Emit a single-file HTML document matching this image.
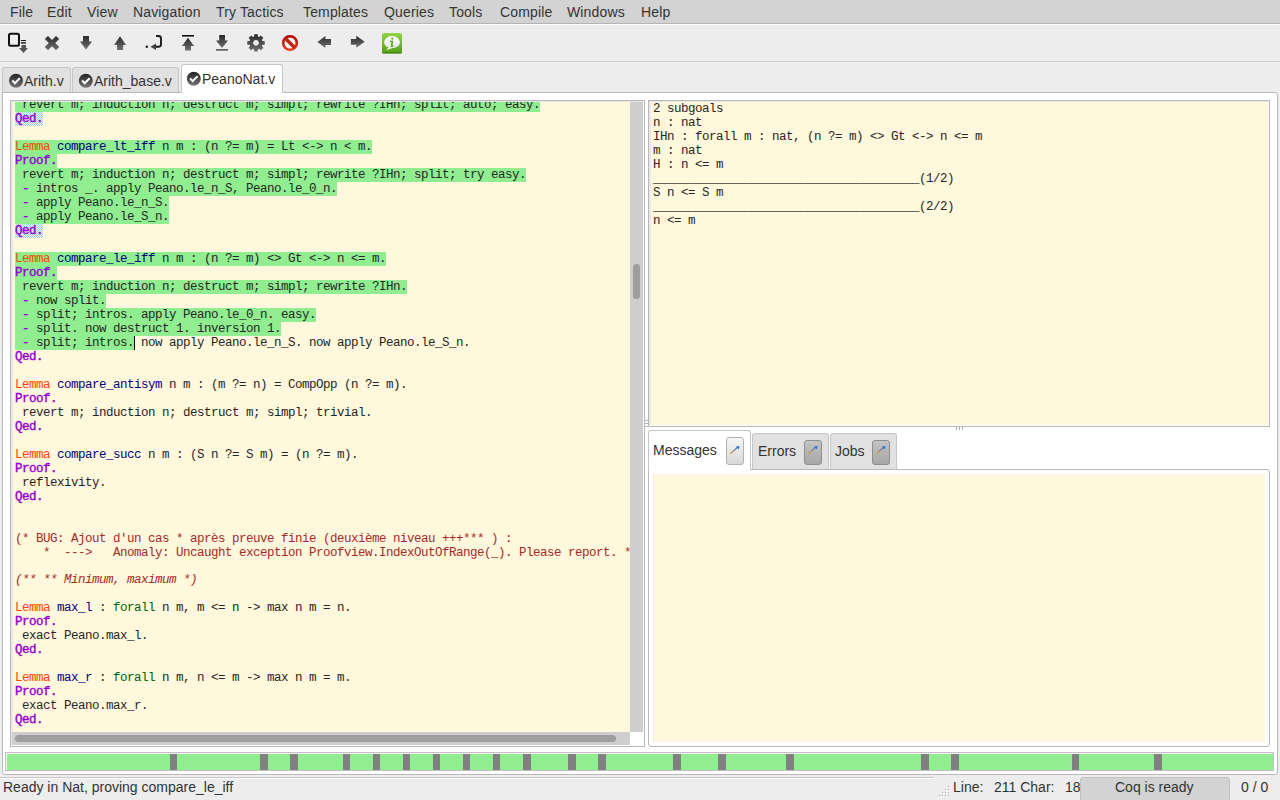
<!DOCTYPE html>
<html><head><meta charset="utf-8">
<style>
*{box-sizing:border-box}
html,body{margin:0;padding:0}
body{width:1280px;height:800px;overflow:hidden;position:relative;background:#ededed;font-family:"Liberation Sans",sans-serif;color:#2e3436}
.abs{position:absolute}
#menubar{position:absolute;left:0;top:0;width:1280px;height:23px;background:#d3d3d3}
#menuline{position:absolute;left:0;top:23px;width:1280px;height:1px;background:#b4b4b4}
#menuline2{position:absolute;left:0;top:24px;width:1280px;height:1px;background:#fdfdfd}
.mi{position:absolute;top:4px;font-size:14px;line-height:17px;color:#333;letter-spacing:0.15px;white-space:pre}
#tbline{position:absolute;left:0;top:60px;width:1280px;height:3px;background:#f1f1f1;border-top:0;box-shadow:none}
#tbline:after{content:"";position:absolute;left:0;top:1px;width:1280px;height:1px;background:#c9c9c9}
.ico{position:absolute;top:26px;width:34px;height:34px}
.tab{position:absolute;background:#e1e1e1;border:1px solid #c6c6c6;border-bottom:none;border-radius:3px 3px 0 0}
.tab.act{background:#fff}
.tabt{position:absolute;font-size:14px;line-height:17px;color:#333;white-space:pre}
#page{position:absolute;left:2px;top:92px;width:1276px;height:683px;background:#fff;border:1px solid #b9b9b9;border-radius:0 3px 3px 3px}
.frame{position:absolute;border:1px solid #b8b8b8;background:#fff}
.cream{position:absolute;background:#fff8dc}
.ln{position:absolute;left:15px;height:14px;font-family:"Liberation Mono",monospace;font-size:12.5px;letter-spacing:-0.5px;line-height:14px;color:#262626;white-space:pre}
.hl{position:absolute;left:15px;height:14px;background:#90ee90}
.dt{position:absolute;left:15px;height:14px;background-color:#fff8dc;background-image:repeating-conic-gradient(#92d0f4 0 25%, transparent 0 50%);background-size:2px 2px}
.cur{position:absolute;width:1px;height:14px;background:#000}
.kw{color:#ff4500}
.nm{color:#000080}
.vk{color:#9400d3;-webkit-text-stroke:0.4px #9400d3}
.fa{color:#006400}
.cm{color:#a52a2a}
.ci{color:#a52a2a;font-style:italic}
.mk{position:absolute;top:754px;height:16px;background:#808080}
.btn{position:absolute;border:1px solid #b3b3b3;border-radius:3px}
</style></head><body>
<div id="menubar"></div><div id="menuline"></div><div id="menuline2"></div>
<div class="mi" style="left:10px">File</div>
<div class="mi" style="left:47px">Edit</div>
<div class="mi" style="left:87px">View</div>
<div class="mi" style="left:133px">Navigation</div>
<div class="mi" style="left:216px">Try Tactics</div>
<div class="mi" style="left:303px">Templates</div>
<div class="mi" style="left:384px">Queries</div>
<div class="mi" style="left:449px">Tools</div>
<div class="mi" style="left:500px">Compile</div>
<div class="mi" style="left:567px">Windows</div>
<div class="mi" style="left:641px">Help</div>
<div id="tbline"></div>

<!-- toolbar icons -->
<svg class="abs" style="left:0;top:25px" width="420" height="36" viewBox="0 25 420 36">
<defs><linearGradient id="ig" x1="0" y1="0" x2="0" y2="1"><stop offset="0" stop-color="#2a2a2a"/><stop offset="1" stop-color="#707070"/></linearGradient></defs>
<!-- new/ open -->
<rect x="9" y="33.8" width="10" height="12" rx="1.5" fill="none" stroke="#111" stroke-width="2"/>
<rect x="21" y="40" width="5" height="1" fill="#111"/>
<rect x="21" y="42.2" width="5" height="1.4" fill="#111"/>
<path d="M21.5 45 h4.5 v3 h2 l-4.5 5 l-4.5 -5 h2.5z" fill="#555"/>
<!-- X -->
<path d="M44.8 39.1 l3.2 -3.2 l4 4 l4 -4 l3.2 3.2 l-4 4 l4 4 l-3.2 3.2 l-4 -4 l-4 4 l-3.2 -3.2 l4 -4z" fill="url(#ig)"/>
<!-- down -->
<path d="M83 36 h6 v5.5 h3 l-6 7.9 l-6 -7.9 h3z" fill="url(#ig)"/>
<!-- up -->
<path d="M120 36.2 l6.1 8.7 h-3 v5 h-6 v-5 h-3z" fill="url(#ig)"/>
<!-- goto cursor -->
<circle cx="146.8" cy="46.8" r="1.3" fill="#222"/>
<path d="M150.4 46.8 l5.6 -3.4 v6.7z" fill="#444"/>
<path d="M155.5 46.8 h3 a2.5 2.5 0 0 0 2.5 -2.5 v-5.8 a2.5 2.5 0 0 0 -2.5 -2.5 h-2.5" fill="none" stroke="#1a1a1a" stroke-width="1.9"/>
<!-- goto start -->
<rect x="182" y="35" width="12" height="1.6" fill="#111"/>
<path d="M188 37.8 l6 8.2 h-3 v4.5 h-6 v-4.5 h-3z" fill="url(#ig)"/>
<!-- goto end -->
<path d="M219.2 35.1 h5.8 v5.3 h3 l-6 7.5 l-6 -7.5 h3.2z" fill="url(#ig)"/>
<rect x="216" y="49.2" width="12" height="1.4" fill="#444"/>
<!-- gear -->
<path d="M254.07 36.59 L254.23 34.18 L257.77 34.18 L257.93 36.59 L259.10 37.07 L260.91 35.48 L263.42 37.99 L261.83 39.80 L262.31 40.97 L264.72 41.13 L264.72 44.67 L262.31 44.83 L261.83 46.00 L263.42 47.81 L260.91 50.32 L259.10 48.73 L257.93 49.21 L257.77 51.62 L254.23 51.62 L254.07 49.21 L252.90 48.73 L251.09 50.32 L248.58 47.81 L250.17 46.00 L249.69 44.83 L247.28 44.67 L247.28 41.13 L249.69 40.97 L250.17 39.80 L248.58 37.99 L251.09 35.48 L252.90 37.07Z M256 40.00 a2.9 2.9 0 1 0 0.01 0z" fill="url(#ig)" fill-rule="evenodd"/>
<!-- stop -->
<defs><linearGradient id="rg" x1="0" y1="0" x2="0" y2="1"><stop offset="0" stop-color="#b30000"/><stop offset="1" stop-color="#e8401c"/></linearGradient></defs>
<circle cx="290" cy="43" r="6.8" fill="#f4f4f4" stroke="url(#rg)" stroke-width="2.6"/>
<path d="M285.2 38.2 l9.6 9.6" stroke="#c82010" stroke-width="3.4"/>
<!-- left arrow -->
<path d="M317.5 42 l7.9 -6.1 v3 h5.6 v6 h-5.6 v3z" fill="url(#ig)"/>
<!-- right arrow -->
<path d="M364.7 41.8 l-8.4 -6 v3.1 h-5.4 v5.9 h5.4 v2.9z" fill="url(#ig)"/>
<!-- info -->
<defs><linearGradient id="gg" x1="0" y1="0" x2="0" y2="1"><stop offset="0" stop-color="#94d448"/><stop offset="1" stop-color="#52a017"/></linearGradient></defs>
<rect x="382" y="33" width="20" height="20.5" rx="2.2" fill="url(#gg)"/>
<rect x="382" y="52" width="20" height="1.5" rx="0.7" fill="#3f7d12" opacity="0.7"/>
<path d="M386 50.6 l2.6 -3.6 l3.2 1.2 z" fill="#eee"/>
<defs><linearGradient id="bg2" x1="0" y1="0" x2="0" y2="1"><stop offset="0" stop-color="#ffffff"/><stop offset="1" stop-color="#e6e6e6"/></linearGradient></defs><ellipse cx="392" cy="42.2" rx="7.9" ry="6.1" fill="url(#bg2)"/>
<circle cx="392.3" cy="38.6" r="1.1" fill="#5aa51e"/>
<path d="M389.9 41.6 h2.5 l-0.8 4.5 h1.8" fill="none" stroke="#5aa51e" stroke-width="1.5"/>
</svg>

<!-- tabs -->
<div class="tab" style="left:2px;top:67px;width:69px;height:25px"></div>
<div class="tab" style="left:72px;top:67px;width:107px;height:25px"></div>
<div id="page"></div>
<div class="tab act" style="left:181px;top:64px;width:102px;height:29px"></div>
<svg class="abs" style="left:0;top:60px" width="300" height="32" viewBox="0 60 300 32">
<defs><linearGradient id="cg" x1="0" y1="0" x2="0" y2="1"><stop offset="0" stop-color="#222"/><stop offset="1" stop-color="#777"/></linearGradient></defs>
<g id="chk"><circle cx="16" cy="80.8" r="7" fill="url(#cg)"/><path d="M12.3 80.5 l2.6 2.7 l4.9 -5" fill="none" stroke="#fff" stroke-width="2"/></g>
<use href="#chk" x="69.8" y="0"/>
<use href="#chk" x="177.8" y="-2.1"/>
</svg>
<div class="tabt" style="left:24px;top:73px">Arith.v</div>
<div class="tabt" style="left:94px;top:73px">Arith_base.v</div>
<div class="tabt" style="left:202px;top:71px">PeanoNat.v</div>

<!-- editor -->
<div class="frame" style="left:10px;top:100px;width:635px;height:647px"></div>
<div class="abs" style="left:11px;top:101px;width:2px;height:644px;background:#e9e9eb"></div>
<div class="cream" style="left:13px;top:101px;width:617px;height:631px"></div>
<div class="abs" style="left:11px;top:101px;width:632px;height:1px;background:#e9e7e9"></div>
<div class="abs" style="left:11px;top:102px;width:619px;height:630px;overflow:hidden">
<div class="abs" style="left:-11px;top:-102px;width:640px;height:760px">
<div class="hl" style="top:98px;width:525px"></div>
<div class="ln" style="top:98px"> revert m; induction n; destruct m; simpl; rewrite ?IHn; split; auto; easy.</div>
<div class="dt" style="top:112px;width:28px"></div>
<div class="ln" style="top:112px"><span class="vk">Qed.</span></div>
<div class="hl" style="top:140px;width:357px"></div>
<div class="ln" style="top:140px"><span class="kw">Lemma</span> <span class="nm">compare_lt_iff</span> n m : (n ?= m) = Lt &lt;-&gt; n &lt; m.</div>
<div class="hl" style="top:154px;width:42px"></div>
<div class="ln" style="top:154px"><span class="vk">Proof.</span></div>
<div class="hl" style="top:168px;width:511px"></div>
<div class="ln" style="top:168px"> revert m; induction n; destruct m; simpl; rewrite ?IHn; split; try easy.</div>
<div class="hl" style="top:182px;width:322px"></div>
<div class="ln" style="top:182px"> <span class="vk">-</span> intros _. apply Peano.le_n_S, Peano.le_0_n.</div>
<div class="hl" style="top:196px;width:154px"></div>
<div class="ln" style="top:196px"> <span class="vk">-</span> apply Peano.le_n_S.</div>
<div class="hl" style="top:210px;width:154px"></div>
<div class="ln" style="top:210px"> <span class="vk">-</span> apply Peano.le_S_n.</div>
<div class="dt" style="top:224px;width:28px"></div>
<div class="ln" style="top:224px"><span class="vk">Qed.</span></div>
<div class="hl" style="top:252px;width:371px"></div>
<div class="ln" style="top:252px"><span class="kw">Lemma</span> <span class="nm">compare_le_iff</span> n m : (n ?= m) &lt;&gt; Gt &lt;-&gt; n &lt;= m.</div>
<div class="hl" style="top:266px;width:42px"></div>
<div class="ln" style="top:266px"><span class="vk">Proof.</span></div>
<div class="hl" style="top:280px;width:392px"></div>
<div class="ln" style="top:280px"> revert m; induction n; destruct m; simpl; rewrite ?IHn.</div>
<div class="hl" style="top:294px;width:91px"></div>
<div class="ln" style="top:294px"> <span class="vk">-</span> now split.</div>
<div class="hl" style="top:308px;width:301px"></div>
<div class="ln" style="top:308px"> <span class="vk">-</span> split; intros. apply Peano.le_0_n. easy.</div>
<div class="hl" style="top:322px;width:266px"></div>
<div class="ln" style="top:322px"> <span class="vk">-</span> split. now destruct 1. inversion 1.</div>
<div class="hl" style="top:336px;width:119px"></div>
<div class="cur" style="top:336px;left:134px"></div>
<div class="ln" style="top:336px"> <span class="vk">-</span> split; intros. now apply Peano.le_n_S. now apply Peano.le_S_n.</div>
<div class="ln" style="top:350px"><span class="vk">Qed.</span></div>
<div class="ln" style="top:378px"><span class="kw">Lemma</span> <span class="nm">compare_antisym</span> n m : (m ?= n) = CompOpp (n ?= m).</div>
<div class="ln" style="top:392px"><span class="vk">Proof.</span></div>
<div class="ln" style="top:406px"> revert m; induction n; destruct m; simpl; trivial.</div>
<div class="ln" style="top:420px"><span class="vk">Qed.</span></div>
<div class="ln" style="top:448px"><span class="kw">Lemma</span> <span class="nm">compare_succ</span> n m : (S n ?= S m) = (n ?= m).</div>
<div class="ln" style="top:462px"><span class="vk">Proof.</span></div>
<div class="ln" style="top:476px"> reflexivity.</div>
<div class="ln" style="top:490px"><span class="vk">Qed.</span></div>
<div class="ln" style="top:532px"><span class="cm">(* BUG: Ajout d&#x27;un cas * après preuve finie (deuxième niveau +++*** ) :</span></div>
<div class="ln" style="top:546px"><span class="cm">    *  ---&gt;   Anomaly: Uncaught exception Proofview.IndexOutOfRange(_). Please report. *)</span></div>
<div class="ln" style="top:573px"><span class="ci">(** ** Minimum, maximum *)</span></div>
<div class="ln" style="top:601px"><span class="kw">Lemma</span> <span class="nm">max_l</span> : <span class="fa">forall</span> n m, m &lt;= n -&gt; max n m = n.</div>
<div class="ln" style="top:615px"><span class="vk">Proof.</span></div>
<div class="ln" style="top:629px"> exact Peano.max_l.</div>
<div class="ln" style="top:643px"><span class="vk">Qed.</span></div>
<div class="ln" style="top:671px"><span class="kw">Lemma</span> <span class="nm">max_r</span> : <span class="fa">forall</span> n m, n &lt;= m -&gt; max n m = m.</div>
<div class="ln" style="top:685px"><span class="vk">Proof.</span></div>
<div class="ln" style="top:699px"> exact Peano.max_r.</div>
<div class="ln" style="top:713px"><span class="vk">Qed.</span></div>
</div></div>
<div class="abs" style="left:630px;top:102px;width:13px;height:630px;background:#cecece"></div>
<div class="abs" style="left:633px;top:264px;width:7px;height:35px;background:#9e9e9e;border-radius:3.5px"></div>
<div class="abs" style="left:12px;top:732px;width:618px;height:13px;background:#cecece"></div>
<div class="abs" style="left:15px;top:735px;width:601px;height:7px;background:#9e9e9e;border-radius:3.5px"></div>

<!-- goals -->
<div class="frame" style="left:648px;top:100px;width:622px;height:327px"></div>
<div class="abs" style="left:649px;top:101px;width:619px;height:324px;background:#e9e9eb"></div>
<div class="cream" style="left:651px;top:102px;width:617px;height:323px"></div>
<div class="ln" style="top:102px;left:653px">2 subgoals</div>
<div class="ln" style="top:116px;left:653px">n : nat</div>
<div class="ln" style="top:130px;left:653px">IHn : forall m : nat, (n ?= m) &lt;&gt; Gt &lt;-&gt; n &lt;= m</div>
<div class="ln" style="top:144px;left:653px">m : nat</div>
<div class="ln" style="top:158px;left:653px">H : n &lt;= m</div>
<div class="ln" style="top:172px;left:653px">______________________________________(1/2)</div>
<div class="ln" style="top:186px;left:653px">S n &lt;= S m</div>
<div class="ln" style="top:200px;left:653px">______________________________________(2/2)</div>
<div class="ln" style="top:214px;left:653px">n &lt;= m</div>
<!-- pane handle -->
<div class="abs" style="left:645px;top:420px;width:3px;height:1px;background:#b8b8b8"></div>
<div class="abs" style="left:645px;top:423px;width:3px;height:1px;background:#b8b8b8"></div>
<div class="abs" style="left:645px;top:426px;width:3px;height:1px;background:#b8b8b8"></div>
<div class="abs" style="left:956px;top:427px;width:1px;height:3px;background:#aaa"></div>
<div class="abs" style="left:959px;top:427px;width:1px;height:3px;background:#aaa"></div>
<div class="abs" style="left:962px;top:427px;width:1px;height:3px;background:#aaa"></div>

<!-- messages notebook -->
<div class="frame" style="left:648px;top:469px;width:622px;height:278px;border-radius:0 3px 3px 3px"></div>
<div class="abs" style="left:653px;top:474px;width:1px;height:268px;background:#ebebef"></div>
<div class="cream" style="left:654px;top:474px;width:611px;height:268px"></div>
<div class="tab act" style="left:648px;top:430px;width:103px;height:40px"></div>
<div class="tab" style="left:752px;top:433px;width:77px;height:36px"></div>
<div class="tab" style="left:830px;top:433px;width:67px;height:36px"></div>
<div class="tabt" style="left:653px;top:442px">Messages</div>
<div class="tabt" style="left:758px;top:443px">Errors</div>
<div class="tabt" style="left:835px;top:443px">Jobs</div>
<div class="btn" style="left:726px;top:437px;width:18px;height:28px;background:linear-gradient(#f6f6f6,#d8d8d8)"></div>
<div class="btn" style="left:804px;top:440px;width:18px;height:25px;background:linear-gradient(#c4c4c4,#a6a6a6);border-color:#8e8e8e"></div>
<div class="btn" style="left:872px;top:440px;width:18px;height:25px;background:linear-gradient(#c4c4c4,#a6a6a6);border-color:#8e8e8e"></div>
<svg class="abs" style="left:0;top:430px" width="900" height="40" viewBox="0 430 900 40">
<defs><linearGradient id="ag" x1="0" y1="1" x2="1" y2="0"><stop offset="0" stop-color="#e0a040"/><stop offset="1" stop-color="#3070d0"/></linearGradient></defs>
<g id="arr"><path d="M730 454 l8.5 -7.5" stroke="url(#ag)" stroke-width="1.2"/><path d="M739.5 446 l-3.5 0.8 l2.7 2.7z" fill="#2f6fcf"/></g>
<use href="#arr" x="78" y="0"/>
<use href="#arr" x="146" y="0"/>
</svg>

<!-- progress -->
<div class="abs" style="left:5px;top:752px;width:1269px;height:19px;border:1px solid #c4c0c4;background:#f6f2f6"></div>
<div class="abs" style="left:7px;top:754px;width:1266px;height:16px;background:#90ee90"></div>
<div class="mk" style="left:170px;width:7px"></div>
<div class="mk" style="left:260px;width:8px"></div>
<div class="mk" style="left:290px;width:8px"></div>
<div class="mk" style="left:343px;width:7px"></div>
<div class="mk" style="left:373px;width:7px"></div>
<div class="mk" style="left:403px;width:7px"></div>
<div class="mk" style="left:433px;width:7px"></div>
<div class="mk" style="left:463px;width:7px"></div>
<div class="mk" style="left:493px;width:7px"></div>
<div class="mk" style="left:523px;width:8px"></div>
<div class="mk" style="left:568px;width:8px"></div>
<div class="mk" style="left:598px;width:8px"></div>
<div class="mk" style="left:673px;width:8px"></div>
<div class="mk" style="left:718px;width:8px"></div>
<div class="mk" style="left:786px;width:8px"></div>
<div class="mk" style="left:921px;width:8px"></div>
<div class="mk" style="left:951px;width:8px"></div>
<div class="mk" style="left:1072px;width:7px"></div>
<div class="mk" style="left:1154px;width:8px"></div>

<!-- status -->
<div class="abs" style="left:0;top:777px;width:934px;height:1px;background:#c9c9c9"></div>
<div class="abs" style="left:0;top:778px;width:934px;height:1px;background:#fafafa"></div>
<svg class="abs" style="left:936px;top:784px" width="16" height="14" viewBox="936 784 16 14">
<g fill="#a8a8a8">
<rect x="948" y="786" width="1" height="1"/>
<rect x="945" y="789" width="1" height="1"/><rect x="948" y="789" width="1" height="1"/>
<rect x="942" y="792" width="1" height="1"/><rect x="945" y="792" width="1" height="1"/><rect x="948" y="792" width="1" height="1"/>
<rect x="939" y="795" width="1" height="1"/><rect x="942" y="795" width="1" height="1"/><rect x="945" y="795" width="1" height="1"/><rect x="948" y="795" width="1" height="1"/>
</g>
<g fill="#ffffff">
<rect x="949" y="787" width="1" height="1"/>
<rect x="946" y="790" width="1" height="1"/><rect x="949" y="790" width="1" height="1"/>
<rect x="943" y="793" width="1" height="1"/><rect x="946" y="793" width="1" height="1"/><rect x="949" y="793" width="1" height="1"/>
<rect x="940" y="796" width="1" height="1"/><rect x="943" y="796" width="1" height="1"/><rect x="946" y="796" width="1" height="1"/><rect x="949" y="796" width="1" height="1"/>
</g></svg>
<div class="abs" style="left:3px;top:779px;font-size:14px;line-height:17px;white-space:pre">Ready in Nat, proving compare_le_iff</div>
<div class="abs" style="left:953px;top:779px;font-size:14px;line-height:17px;white-space:pre">Line:</div>
<div class="abs" style="left:994px;top:779px;font-size:14px;line-height:17px;white-space:pre">211 Char:</div>
<div class="abs" style="left:1065px;top:779px;font-size:14px;line-height:17px;white-space:pre">18</div>
<div class="abs" style="left:1080px;top:777px;width:150px;height:26px;background:#d3d3d3;border:1px solid #c2c2c2;border-radius:3px"></div>
<div class="abs" style="left:1115px;top:779px;font-size:14px;line-height:17px;white-space:pre">Coq is ready</div>
<div class="abs" style="left:1241px;top:779px;font-size:14px;line-height:17px;white-space:pre">0 / 0</div>
</body></html>
